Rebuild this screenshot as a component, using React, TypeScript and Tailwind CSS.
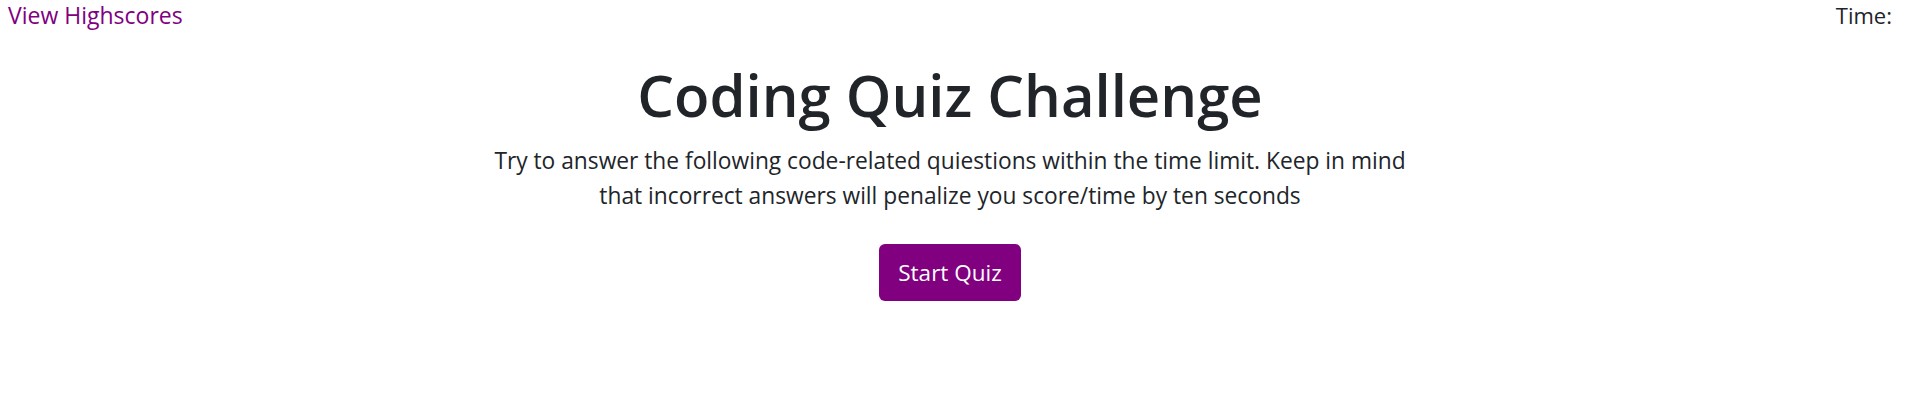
export default function App() {
  return (
    <div className="min-h-[417px] w-full bg-white text-[#212529]" style={{ fontFamily: '"Open Sans", "Noto Sans", sans-serif' }}>
      <header className="flex items-start justify-between pl-[8px] pr-[18px]">
        <a href="#" className="text-[23px] leading-[30px] text-[#800080]">
          View Highscores
        </a>
        <p className="text-[22px] leading-[30px]">Time: </p>
      </header>
      <main className="flex flex-col items-center pr-[10px] text-center">
        <h1 className="mt-[28px] text-[58px] font-semibold leading-[74px]">Coding Quiz Challenge</h1>
        <p className="mt-[11px] w-[930px] text-[22.75px] leading-[35px]">
          Try to answer the following code-related quiestions within the time limit. Keep in mind that incorrect answers will penalize you score/time by ten seconds
        </p>
        <button className="mt-[31px] h-[57px] w-[142px] rounded-[6px] bg-[#800080] text-[22.5px] text-white">
          Start Quiz
        </button>
      </main>
    </div>
  )
}
